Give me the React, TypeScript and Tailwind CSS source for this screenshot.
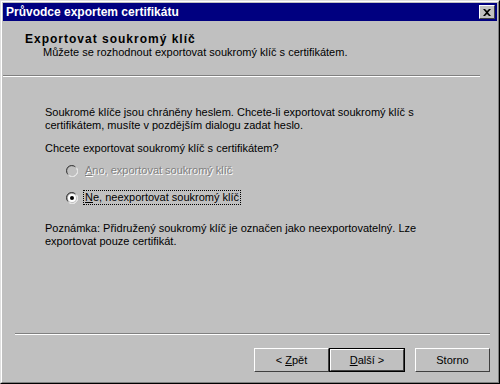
import React from 'react';

const font = { fontFamily: '"Liberation Sans", Arial, sans-serif' };

// Win9x style 3D edge helpers
const raised =
  'border border-t-white border-l-white border-r-[#404040] border-b-[#404040]';

const Radio: React.FC<{ checked?: boolean; disabled?: boolean }> = ({ checked, disabled }) => (
  <svg width="12" height="12" viewBox="0 0 12 12" className="shrink-0">
    {/* outer sunken ring */}
    <path d="M1 8 A5.5 5.5 0 0 1 8 1" stroke="#808080" strokeWidth="1" fill="none" />
    <path d="M2 9.5 A5 5 0 0 1 9.5 2" stroke="#404040" strokeWidth="1" fill="none" />
    <path d="M3.5 11 A5.5 5.5 0 0 0 11 3.5" stroke="#ffffff" strokeWidth="1" fill="none" />
    <path d="M2.5 10 A5 5 0 0 0 10 2.5" stroke="#dfdfdf" strokeWidth="1" fill="none" />
    <circle cx="6" cy="6" r="4" fill={disabled ? '#c0c0c0' : '#ffffff'} />
    {checked && <circle cx="6" cy="6" r="2" fill="#000" />}
  </svg>
);

const Btn: React.FC<{ children: React.ReactNode; isDefault?: boolean; w: string }> = ({ children, isDefault, w }) => (
  <div className={`${w} h-[24px] ${isDefault ? 'border border-black' : ''}`}>
    <div className={`h-full w-full ${raised} flex items-center justify-center text-[11px] text-black bg-[#c0c0c0]`}>
      {children}
    </div>
  </div>
);

export default function App() {
  return (
    <div
      className="w-[500px] h-[384px] bg-[#c0c0c0] border border-t-[#dfdfdf] border-l-[#dfdfdf] border-r-black border-b-black"
      style={font}
    >
      <div className="h-full flex flex-col border border-t-white border-l-white border-r-[#808080] border-b-[#808080] p-px">
        {/* Title bar */}
        <div className="h-[18px] bg-[#000080] flex items-center justify-between pl-[3px] pr-[2px]">
          <span className="text-white font-bold text-[12px] leading-none">Průvodce exportem certifikátu</span>
          <div className={`w-[16px] h-[14px] bg-[#c0c0c0] ${raised} flex items-center justify-center`}>
            <svg width="8" height="7" viewBox="0 0 8 7">
              <path d="M0 0h2l2 2 2-2h2L5 3.5 8 7H6L4 5 2 7H0l3-3.5z" fill="#000" />
            </svg>
          </div>
        </div>

        {/* Header */}
        <div className="pt-[12px] pl-[22px] h-[54px] text-[11px] leading-[13px] text-black">
          <div className="font-bold text-[12px] tracking-[1px]">Exportovat soukromý klíč</div>
          <div className="pl-[18px]">Můžete se rozhodnout exportovat soukromý klíč s certifikátem.</div>
        </div>
        <div className="mr-[17px] border-t border-t-[#808080] border-b border-b-white" />

        {/* Body */}
        <div className="flex-1 pl-[42px] pt-[29px] text-[11px] leading-[13px] text-black">
          <p>
            Soukromé klíče jsou chráněny heslem. Chcete-li exportovat soukromý klíč s
            <br />
            certifikátem, musíte v pozdějším dialogu zadat heslo.
          </p>
          <p className="mt-[10px]">Chcete exportovat soukromý klíč s certifikátem?</p>

          <div className="mt-[9px] pl-[21px] flex items-center gap-[7px] h-[13px]">
            <Radio disabled />
            <span className="text-[#808080]" style={{ textShadow: '1px 1px 0 #ffffff' }}>
              <span className="underline">A</span>no, exportovat soukromý klíč
            </span>
          </div>

          <div className="mt-[14px] pl-[21px] flex items-center gap-[5px] h-[13px]">
            <Radio checked />
            <span className="border border-dotted border-black px-px">
              <span className="underline">N</span>e, neexportovat soukromý klíč
            </span>
          </div>

          <p className="mt-[18px]">
            Poznámka: Přidružený soukromý klíč je označen jako neexportovatelný. Lze
            <br />
            exportovat pouze certifikát.
          </p>
        </div>

        {/* Footer */}
        <div className="ml-[12px] mr-[7px] border-t border-t-[#808080] border-b border-b-white" />
        <div className="h-[46px] flex items-start justify-end pt-[13px] pr-[7px]">
          <Btn w="w-[75px]">
            &lt; <span className="underline ml-[3px]">Z</span>pět
          </Btn>
          <Btn w="w-[76px]" isDefault>
            <span className="underline">D</span>alší &gt;
          </Btn>
          <div className="w-[10px]" />
          <Btn w="w-[75px]">Storno</Btn>
        </div>
      </div>
    </div>
  );
}
